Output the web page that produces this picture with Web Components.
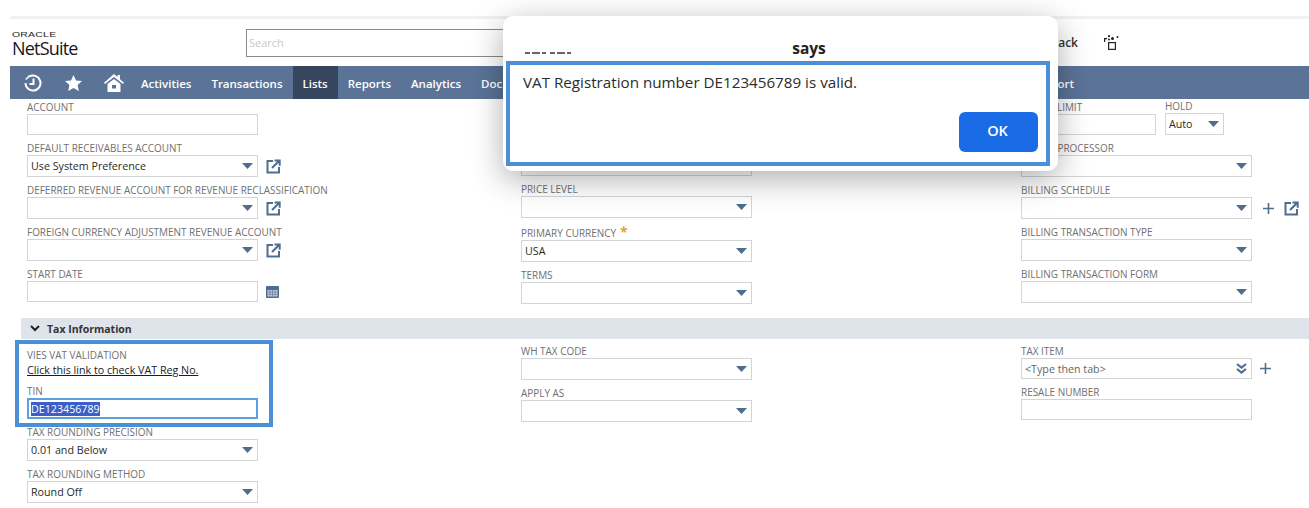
<!DOCTYPE html>
<html>
<head>
<meta charset="utf-8">
<title>NetSuite</title>
<style>
  html, body { margin: 0; background: #fff; }
  body { font-family: "Open Sans", "Liberation Sans", sans-serif; width: 1309px; height: 508px; overflow: hidden; position: relative; }
</style>
</head>
<body>
<ns-header></ns-header>
<ns-nav>
  <span slot="items">Activities</span>
  <span slot="items">Transactions</span>
  <span slot="items" class="on">Lists</span>
  <span slot="items">Reports</span>
  <span slot="items">Analytics</span>
  <span slot="items">Doc</span>
</ns-nav>

<ns-columns>
  <ns-col>
    <ns-field label="Account"></ns-field>
    <ns-field label="Default Receivables Account" kind="select" icon="open">Use System Preference</ns-field>
    <ns-field label="Deferred Revenue Account for Revenue Reclassification" kind="select" icon="open"></ns-field>
    <ns-field label="Foreign Currency Adjustment Revenue Account" kind="select" icon="open"></ns-field>
    <ns-field label="Start Date" icon="calendar"></ns-field>
  </ns-col>
  <ns-col style="padding-top:40px">
    <ns-field kind="select"></ns-field>
    <ns-field label="Price Level" kind="select"></ns-field>
    <ns-field label="Primary Currency" kind="select" required style="margin-top:2px">USA</ns-field>
    <ns-field label="Terms" kind="select"></ns-field>
  </ns-col>
  <ns-col>
    <ns-row>
      <ns-field label="Credit Limit" width="135"></ns-field>
      <ns-field label="Hold" kind="select" width="59" tight>Auto</ns-field>
    </ns-row>
    <ns-field label="Public Processor" kind="select"></ns-field>
    <ns-field label="Billing Schedule" kind="select" icon="plus-open"></ns-field>
    <ns-field label="Billing Transaction Type" kind="select"></ns-field>
    <ns-field label="Billing Transaction Form" kind="select"></ns-field>
  </ns-col>
</ns-columns>

<ns-section title="Tax Information"></ns-section>

<ns-columns tax>
  <ns-col>
    <ns-callout>
      <ns-link label="VIES VAT Validation">Click this link to check VAT Reg No.</ns-link>
      <ns-field label="TIN" focused><mark-text>DE123456789</mark-text></ns-field>
    </ns-callout>
    <ns-field label="Tax Rounding Precision" kind="select">0.01 and Below</ns-field>
    <ns-field label="Tax Rounding Method" kind="select">Round Off</ns-field>
  </ns-col>
  <ns-col>
    <ns-field label="WH Tax Code" kind="select"></ns-field>
    <ns-field label="Apply As" kind="select"></ns-field>
  </ns-col>
  <ns-col>
    <ns-field label="Tax Item" kind="combo" icon="plus"><span style="color:#666">&lt;Type then tab&gt;</span></ns-field>
    <ns-field label="Resale Number"></ns-field>
  </ns-col>
</ns-columns>

<ns-dialog title="says">
  VAT Registration number DE123456789 is valid.
</ns-dialog>

<script>
const ICON = "#4f6d8f";
const icons = {
  open: `<svg width="15" height="15" viewBox="0 0 15 15" fill="none" stroke="${ICON}" stroke-width="2"><path d="M7 2H1.500v11.500H13V8"/><path d="M6 9l7-7M8.500 1.500h5.200v5.200" /></svg>`,
  plus: `<svg width="11" height="11" viewBox="0 0 11 11" stroke="${ICON}" stroke-width="1.600"><path d="M5.500 0v11M0 5.500h11"/></svg>`,
  calendar: `<svg width="13" height="12" viewBox="0 0 13 12"><rect width="13" height="12" rx="1" fill="${ICON}"/><path d="M1.500 4h10v6.500h-10z" fill="#c4d0dc"/><path d="M4 4v6.500M6.500 4v6.500M9 4v6.500M1.500 6h10M1.500 8.200h10" stroke="${ICON}" stroke-width=".6"/></svg>`,
  caret: `<svg width="11" height="6" viewBox="0 0 11 6"><path d="M0 0h11L5.500 6z" fill="${ICON}"/></svg>`,
  combo: `<svg width="11" height="11" viewBox="0 0 11 11" fill="none" stroke="${ICON}" stroke-width="2.200"><path d="M1 1l4.500 3.500L10 1M1 6l4.500 3.500L10 6"/></svg>`
};

class NsHeader extends HTMLElement {
  constructor() {
    super();
    this.attachShadow({ mode: "open" }).innerHTML = `
      <style>
        :host { display: flex; align-items: center; height: 47px; margin: 16px 0 0 10px; border-top: 3px solid #f1f1f1; color: #222; }
        .logo { width: 236px; padding: 3px 0 0 2px; box-sizing: border-box; flex: none; }
        .oracle { font: 400 8px/8px "Liberation Sans", sans-serif; letter-spacing: .2px; transform: scaleX(1.3); transform-origin: left; color: #222; }
        .suite { font: 400 18px/19px "Open Sans", sans-serif; letter-spacing: -.8px; color: #161616; }
        input { width: 500px; height: 26px; margin: 0; padding: 0 2px; box-sizing: content-box; border: 1px solid #8a8a8a; font: 11px "Open Sans", sans-serif; }
        input::placeholder { color: #c8c8c8; opacity: 1; }
        .fb { margin-left: auto; font: 600 12px "Open Sans", sans-serif; color: #333; }
        svg { margin: 0 190px 0 26px; }
      </style>
      <div class="logo"><div class="oracle">ORACLE</div><div class="suite">NetSuite</div></div>
      <input placeholder="Search" readonly>
      <span class="fb">Feedback</span>
      <svg width="15" height="15" viewBox="0 0 15 15" fill="#222"><path d="M0 3h3v1.200H1.200V7H0z"/><circle cx="5" cy="1.200" r="1.100"/><circle cx="8.500" cy="3.400" r="1.500"/><circle cx="13.500" cy="2" r="1"/><circle cx="5" cy="4.600" r="1"/><rect x="4.600" y="7.600" width="6.800" height="6.800" fill="none" stroke="#222" stroke-width="1.200"/></svg>`;
  }
}

class NsNav extends HTMLElement {
  constructor() {
    super();
    this.attachShadow({ mode: "open" }).innerHTML = `
      <style>
        :host { display: flex; align-items: stretch; height: 33px; margin-left: 10px; background: #5a7397; color: #fff; font: 600 11.500px "Open Sans", sans-serif; }
        .ic { display: flex; align-items: center; padding: 0 0 0 14px; gap: 23px; width: 121px; box-sizing: border-box; flex: none; }
        ::slotted(span) { display: flex; align-items: center; padding: 1px 10px 0; }
        ::slotted(.on) { background: #36465f; }
        .rest { display: flex; align-items: center; padding-top: 1px; margin-left: auto; margin-right: 235px; }
      </style>
      <div class="ic">
        <svg width="18" height="18" viewBox="0 0 18 18" fill="none" stroke="#fff" stroke-width="2"><path d="M5 2.700A7.500 7.500 0 1 1 1.500 9"/><path d="M1.800 5.500l3.700-3.800" stroke-width="1.500"/><path d="M9.500 4.500V10H5.500"/></svg>
        <svg width="17" height="16" viewBox="0 0 17 16" fill="#fff"><path d="M8.500 0l2.500 5.400 6 .7-4.400 4 1.200 5.900-5.300-3-5.300 3 1.200-5.900L0 6.100l6-.7z"/></svg>
        <svg width="20" height="18" viewBox="0 0 20 18" fill="#fff" style="margin-left:-1px"><path d="M10 0l3.500 3V1h2.500v4.200l4 3.600-1 1.200L10 3 1 10 0 8.800z"/><path fill-rule="evenodd" d="M3.500 10L10 5l6.500 5v8h-13zM8 11v3.500h4V11z"/></svg>
      </div>
      <slot name="items"></slot>
      <div class="rest">Support</div>`;
  }
}

class NsColumns extends HTMLElement {
  constructor() {
    super();
    this.attachShadow({ mode: "open" }).innerHTML = `
      <style>
        :host { display: grid; grid-template-columns: 494px 500px 1fr; padding: 2px 0 0 27px; }
        :host([tax]) { padding-top: 6px; }
      </style>
      <slot></slot>`;
  }
}

class NsCol extends HTMLElement {
  constructor() {
    super();
    this.attachShadow({ mode: "open" }).innerHTML = `
      <style>:host { display: flex; flex-direction: column; align-items: flex-start; }</style>
      <slot></slot>`;
  }
}

class NsRow extends HTMLElement {
  constructor() {
    super();
    this.attachShadow({ mode: "open" }).innerHTML = `
      <style>:host { display: flex; gap: 9px; }</style>
      <slot></slot>`;
  }
}

class NsField extends HTMLElement {
  constructor() {
    super();
    const label = this.getAttribute("label") || "";
    const kind = this.getAttribute("kind") || "text";
    const icon = this.getAttribute("icon");
    const width = this.getAttribute("width") || 231;
    let after = "";
    if (icon === "open") after = `<span class="after">${icons.open}</span>`;
    if (icon === "calendar") after = `<span class="after">${icons.calendar}</span>`;
    if (icon === "plus") after = `<span class="after">${icons.plus}</span>`;
    if (icon === "plus-open") after = `<span class="after" style="margin-left:11px;gap:10px">${icons.plus}${icons.open}</span>`;
    let end = "";
    if (kind === "select") end = `<span class="caret">${icons.caret}</span>`;
    if (kind === "combo") end = `<span class="caret">${icons.combo}</span>`;
    const star = this.hasAttribute("required") ? `<b>*</b>` : "";
    this.attachShadow({ mode: "open" }).innerHTML = `
      <style>
        :host { display: block; margin-bottom: 7px; }
        :host([tight]) { margin-top: -1px; }
        .lab { height: 13px; font: 9.950px/13px "Open Sans", sans-serif; color: #707070; text-transform: uppercase; white-space: nowrap; }
        .lab b { color: #d49a2a; font-size: 14px; line-height: 10px; margin-left: 4px; font-weight: 600; }
        .line { display: flex; align-items: center; }
        .box { display: flex; align-items: center; justify-content: space-between; box-sizing: border-box; width: ${width}px; height: 21px; border: 1px solid #d2d4d6; padding: 0 4px 0 3px; background: #fff; font: 10.700px "Open Sans", sans-serif; color: #2a2a2a; white-space: nowrap; }
        :host([kind="select"]) .box { height: 22px; padding-bottom: 1px; }
        :host([tight]) .box { padding-left: 3px; padding-right: 4px; }
        :host([focused]) .box { border: 2px solid #5ba0e0; padding-left: 2px; }
        .caret { display: flex; flex: none; }
        .after { display: flex; align-items: center; margin-left: 8px; }
      </style>
      <div class="lab">${label}${star}</div>
      <div class="line"><div class="box"><span><slot></slot></span>${end}</div>${after}</div>`;
  }
}

class MarkText extends HTMLElement {
  constructor() {
    super();
    this.attachShadow({ mode: "open" }).innerHTML = `
      <style>:host { display: inline-block; background: #3a5fc8; color: #fff; line-height: 14px; }</style>
      <slot></slot>`;
  }
}

class NsLink extends HTMLElement {
  constructor() {
    super();
    this.attachShadow({ mode: "open" }).innerHTML = `
      <style>
        :host { display: block; margin-bottom: 7px; }
        .lab { font: 9.950px/13px "Open Sans", sans-serif; color: #707070; text-transform: uppercase; }
        a { display: block; padding-top: 1px; font: 10.700px/15px "Open Sans", sans-serif; color: #1c1c1c; text-decoration: underline; }
      </style>
      <div class="lab">${this.getAttribute("label")}</div>
      <a href="#"><slot></slot></a>`;
  }
}

class NsCallout extends HTMLElement {
  constructor() {
    super();
    this.attachShadow({ mode: "open" }).innerHTML = `
      <style>
        :host { display: block; position: relative; margin-top: 4px; }
        .frame { position: absolute; left: -12px; top: -9px; width: 258px; height: 87px; box-sizing: border-box; border: 4px solid #4a90d9; pointer-events: none; }
      </style>
      <slot></slot>
      <div class="frame"></div>`;
  }
}

class NsSection extends HTMLElement {
  constructor() {
    super();
    this.attachShadow({ mode: "open" }).innerHTML = `
      <style>
        :host { display: flex; align-items: center; gap: 7px; height: 21px; margin: 7px 0 0 21px; padding-left: 9px; background: #dfe4eb; color: #333; font: 700 10.500px "Open Sans", sans-serif; }
      </style>
      <svg width="10" height="7" viewBox="0 0 10 7" fill="none" stroke="#222" stroke-width="2"><path d="M1 1l4 4 4-4"/></svg>
      <span>${this.getAttribute("title")}</span>`;
  }
}

class NsDialog extends HTMLElement {
  constructor() {
    super();
    this.attachShadow({ mode: "open" }).innerHTML = `
      <style>
        :host { display: flex; flex-direction: column; position: absolute; left: 503px; top: 16px; width: 555px; height: 155px; box-sizing: border-box; padding: 0 8px 5px 3px; background: #fff; border-radius: 10px; box-shadow: 0 8px 32px rgba(0,0,0,.32); }
        h1 { flex: none; height: 45px; margin: 0; padding-left: 62px; font: 700 15.500px/64px "Open Sans", sans-serif; color: #222; text-align: center; position: relative; }
        h1 svg { position: absolute; left: 19px; top: 36px; }
        .frame { flex: 1; display: flex; flex-direction: column; justify-content: space-between; box-sizing: border-box; border: 4px solid #4a90d9; padding: 5px 8px 10px 13px; }
        .msg { font: 15.200px/24px "Open Sans", sans-serif; color: #2c2c2c; }
        button { align-self: flex-end; width: 79px; height: 40px; border: 0; border-radius: 6px; padding: 0 2px 3px 0; background: #1a6be6; color: #fff; font: 600 14.500px "Open Sans", sans-serif; }
      </style>
      <h1>${this.getAttribute("title")}<svg width="50" height="2" viewBox="0 0 50 2" stroke="#333" stroke-width="1.400" stroke-dasharray="5 2 8 2 4 4"><path d="M0 1h48"/></svg></h1>
      <div class="frame">
        <div class="msg"><slot></slot></div>
        <button>OK</button>
      </div>`;
  }
}

customElements.define("ns-header", NsHeader);
customElements.define("ns-nav", NsNav);
customElements.define("ns-columns", NsColumns);
customElements.define("ns-col", NsCol);
customElements.define("ns-row", NsRow);
customElements.define("ns-field", NsField);
customElements.define("mark-text", MarkText);
customElements.define("ns-link", NsLink);
customElements.define("ns-callout", NsCallout);
customElements.define("ns-section", NsSection);
customElements.define("ns-dialog", NsDialog);
</script>
</body>
</html>
